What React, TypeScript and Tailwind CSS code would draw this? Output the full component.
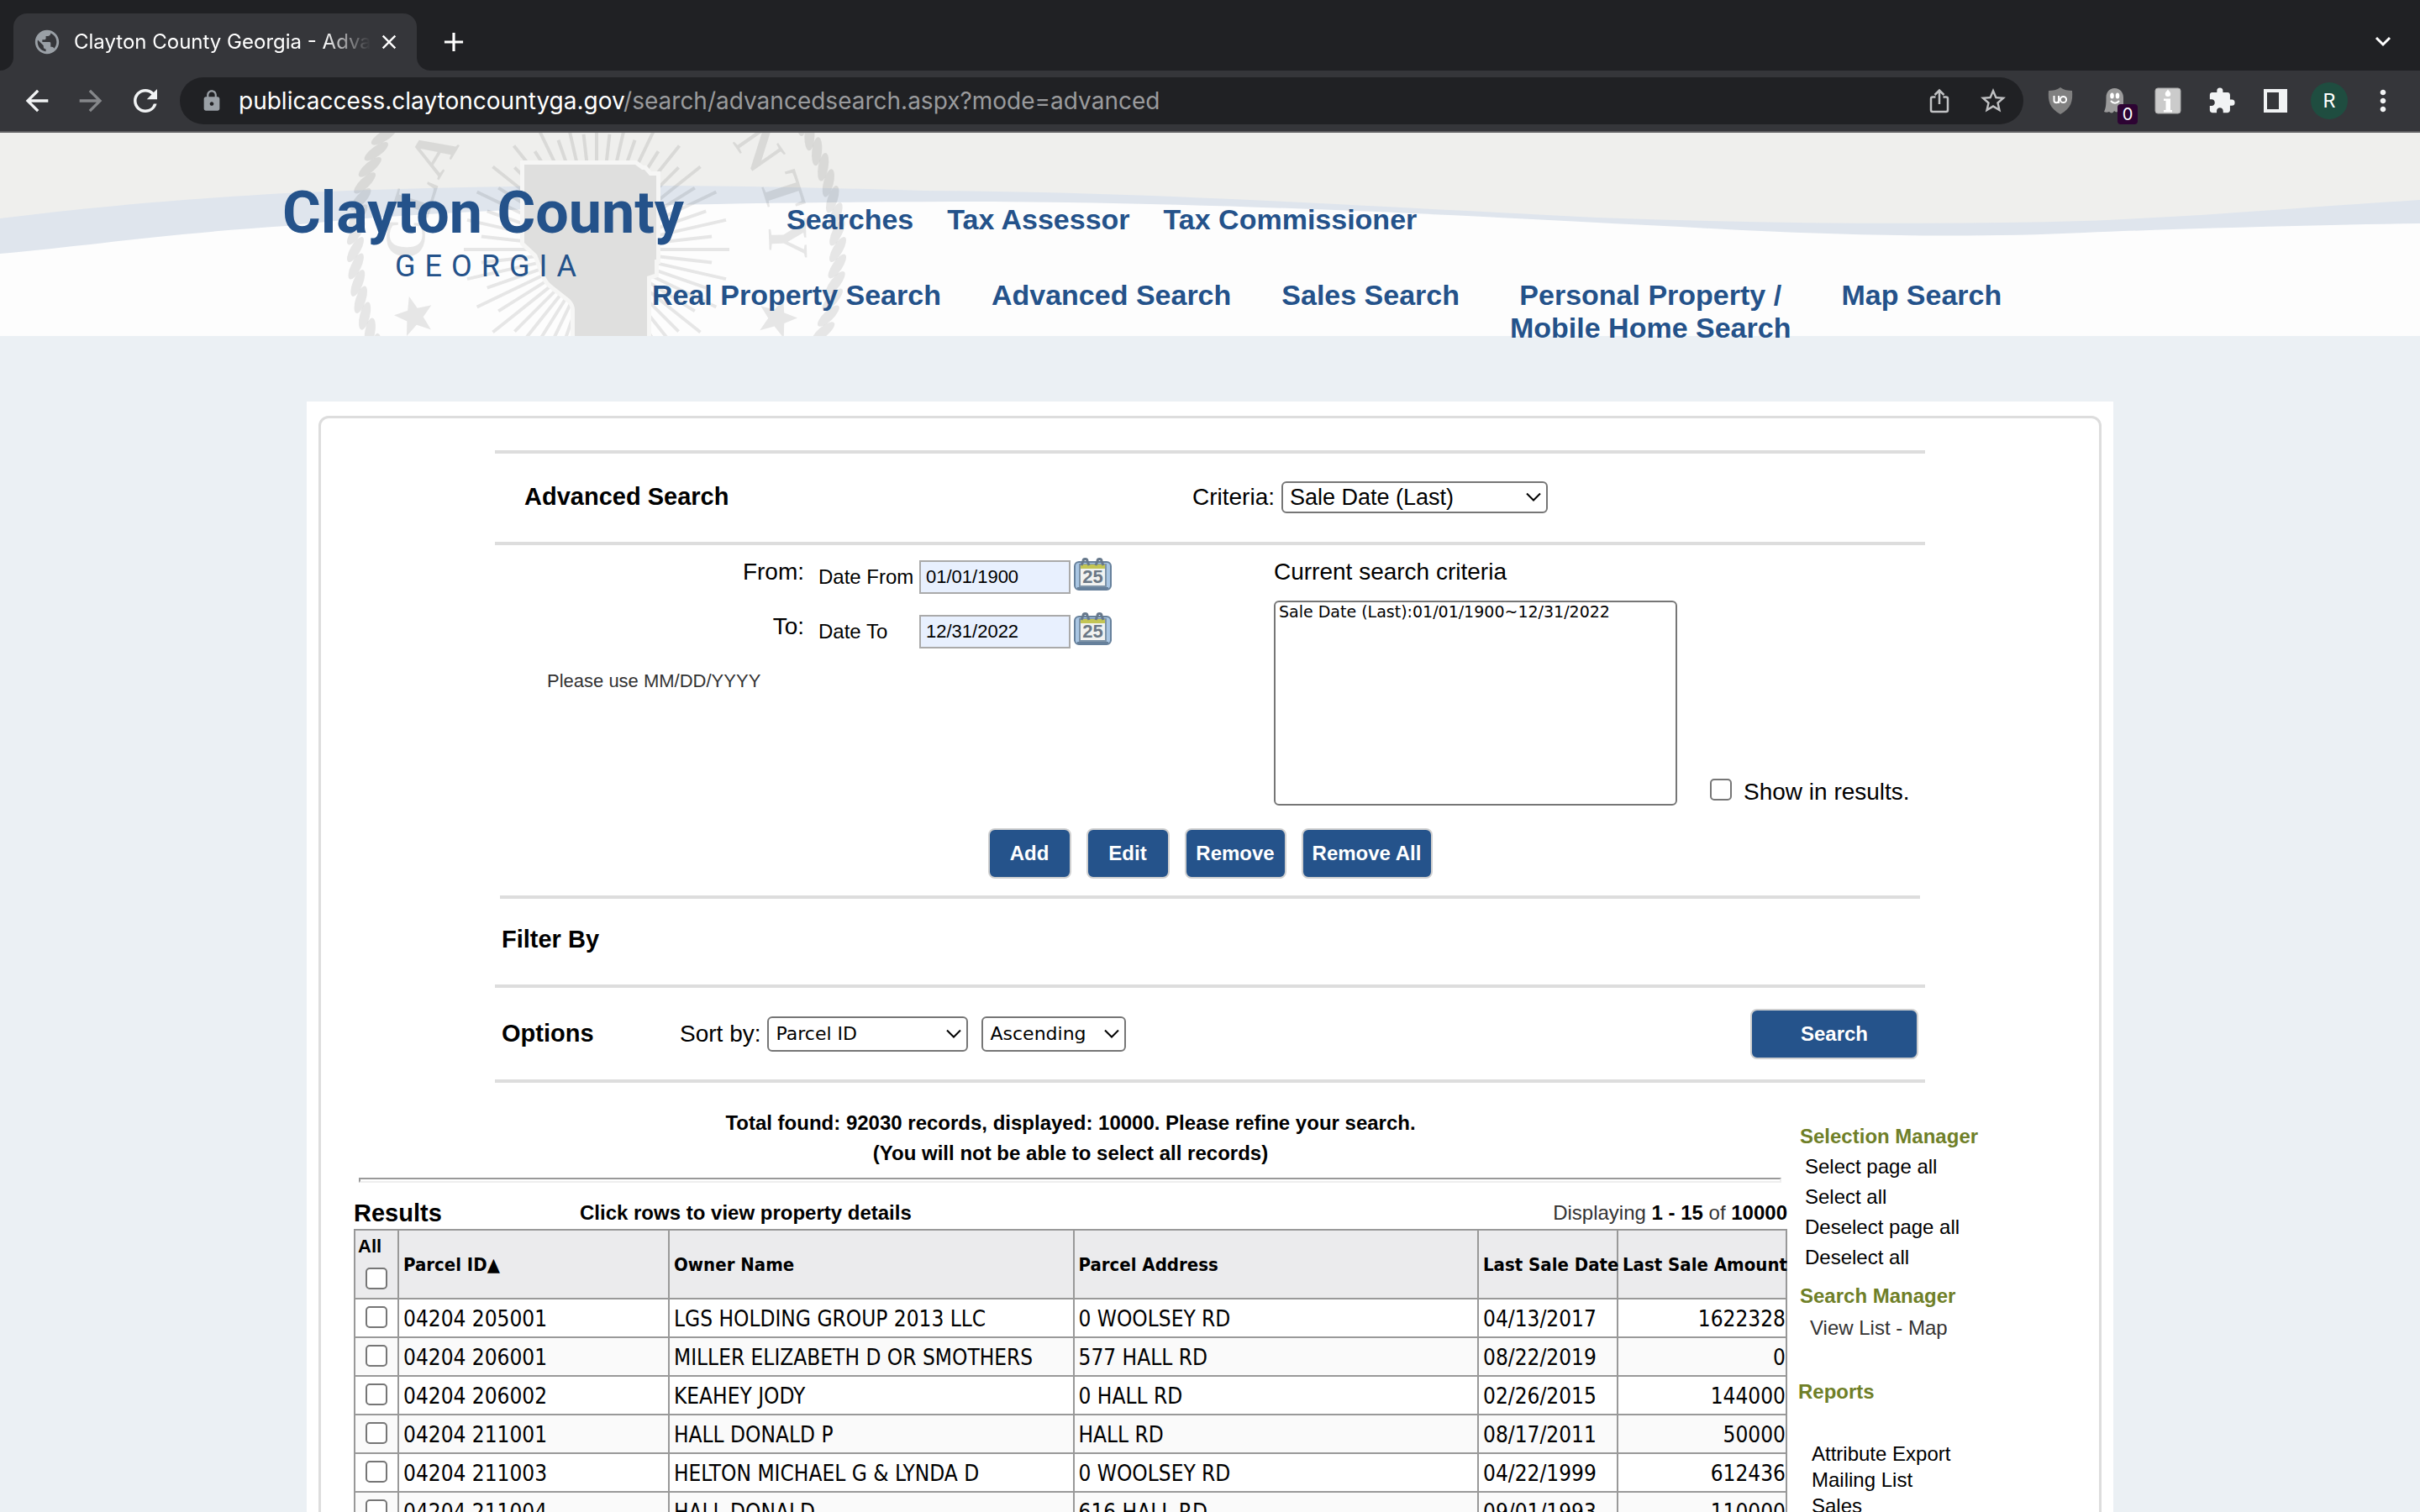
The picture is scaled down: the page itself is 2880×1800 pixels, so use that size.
import React from "react";
import {
  MdAdd,
  MdArrowBack,
  MdArrowForward,
  MdClose,
  MdExtension,
  MdLock,
  MdMoreVert,
  MdPublic,
  MdRefresh,
  MdStarBorder,
} from "react-icons/md";

/* ---------- Browser frame ---------- */

function TabFlare({ side }: { side: "left" | "right" }) {
  const left = side === "left";
  return (
    <svg
      className={left ? "absolute bottom-0 -left-4 size-4" : "absolute bottom-0 -right-4 size-4"}
      viewBox="0 0 16 16"
      aria-hidden="true"
    >
      <path d={left ? "M16 0A16 16 0 0 1 0 16H16Z" : "M0 0A16 16 0 0 0 16 16H0Z"} fill="#35363a" />
    </svg>
  );
}

function TabStrip() {
  return (
    <div className="flex h-[84px] items-end bg-[#202124]">
      <div className="relative ml-4 flex h-[68px] w-[480px] items-center rounded-t-2xl bg-[#35363a] pl-[23px] pr-[19px]">
        <TabFlare side="left" />
        <MdPublic className="size-[34px] shrink-0 text-[#9aa0a6]" />
        <span className="ml-[15px] flex-1 overflow-hidden whitespace-nowrap text-[24px] text-white [mask-image:linear-gradient(to_right,#000_84%,transparent)]">
          Clayton County Georgia - Adva
        </span>
        <button type="button" aria-label="Close tab" className="ml-2 text-white">
          <MdClose className="size-7" />
        </button>
        <TabFlare side="right" />
      </div>
      <button type="button" aria-label="New tab" className="mb-[15px] ml-[25px] text-white">
        <MdAdd className="size-[38px]" />
      </button>
      <button type="button" aria-label="Search tabs" className="mb-[24px] ml-auto mr-[34px]">
        <svg className="h-5 w-5" viewBox="0 0 20 20" fill="none" stroke="#fff" strokeWidth="3" aria-hidden="true">
          <path d="M2 5l8 8 8-8" />
        </svg>
      </button>
    </div>
  );
}

function ShieldIcon() {
  return (
    <svg className="h-8 w-[30px]" viewBox="0 0 30 32" aria-hidden="true">
      <path d="M15 0c4 3 9 4 14 4 1 12-1 21-14 28C2 25 0 16 1 4c5 0 10-1 14-4z" fill="#808080" />
      <path d="M7.500 10v5.500a2.800 2.800 0 0 0 5.600 0V10" fill="none" stroke="#fff" strokeWidth="2" />
      <path d="M13.100 19V10" stroke="#fff" strokeWidth="2" />
      <circle cx="18.500" cy="14.500" r="3.600" fill="none" stroke="#fff" strokeWidth="2" />
    </svg>
  );
}

function GhostIcon() {
  return (
    <svg className="h-[30px] w-[26px]" viewBox="0 0 26 30" aria-hidden="true">
      <path
        d="M13.500 0C20 0 24 5 24 11v16c-2 2-4 1-5-1-2 3-4 3-6 1-1 3-4 3-6 1-2 1-4 1-6 0 2-4 2.500-8 2.500-17C3.500 5 7 0 13.500 0z"
        fill="#9b9b9b"
      />
      <ellipse cx="10.500" cy="9" rx="2.300" ry="3.500" fill="#fff" />
      <ellipse cx="17" cy="9" rx="2.300" ry="3.500" fill="#fff" />
      <path d="M9 15c3 3.500 7 3.500 10 0" fill="none" stroke="#fff" strokeWidth="2" />
    </svg>
  );
}

function ExtCell({ label, children }: { label: string; children: React.ReactNode }) {
  return (
    <button type="button" aria-label={label} className="relative flex h-14 w-16 items-center justify-center">
      {children}
    </button>
  );
}

function Toolbar() {
  return (
    <div className="flex h-[74px] items-center border-b-2 border-[#5f5f62] bg-[#35363a] pl-6 pr-3">
      <div className="flex items-center gap-6 text-[#f1f3f4]">
        <button type="button" aria-label="Back">
          <MdArrowBack className="size-10" />
        </button>
        <button type="button" aria-label="Forward" className="text-[#85878a]">
          <MdArrowForward className="size-10" />
        </button>
        <button type="button" aria-label="Reload">
          <MdRefresh className="size-[42px]" />
        </button>
      </div>
      <div className="ml-5 mr-3 flex h-14 flex-1 items-center rounded-full bg-[#202124] pl-6 pr-1">
        <MdLock className="size-7 shrink-0 text-[#9aa0a6]" />
        <div className="ml-[18px] flex-1 whitespace-nowrap text-[28px] text-[#9a9b9d]">
          <span className="text-white">publicaccess.claytoncountyga.gov</span>/search/advancedsearch.aspx?mode=advanced
        </div>
        <ExtCell label="Share">
          <svg className="h-[30px] w-6" viewBox="0 0 24 30" fill="none" stroke="#c0c1c3" strokeWidth="2.500" aria-hidden="true">
            <path d="M7.500 10.500H4A2 2 0 0 0 2 12.500V26a2 2 0 0 0 2 2h16a2 2 0 0 0 2-2V12.500a2 2 0 0 0-2-2h-3.500M12 19V2.500M6.500 8L12 2.500 17.500 8" />
          </svg>
        </ExtCell>
        <ExtCell label="Bookmark">
          <MdStarBorder className="size-9 text-[#c0c1c3]" />
        </ExtCell>
      </div>
      <div className="flex items-center">
        <ExtCell label="Content blocker">
          <ShieldIcon />
        </ExtCell>
        <ExtCell label="Tracker blocker">
          <GhostIcon />
          <span className="absolute bottom-0 left-9 flex h-6 w-6 items-center justify-center rounded bg-[#2d0433] text-[20px] leading-6 text-white">
            0
          </span>
        </ExtCell>
        <ExtCell label="Information extension">
          <svg className="size-8" viewBox="0 0 32 32" aria-hidden="true">
            <rect x="1" y="1" width="30" height="30" rx="3" fill="#cbcbcb" stroke="#a8a8a8" />
            <path d="M16 2.500c1 2 3.300 3 3.300 5.200a3.300 3.300 0 0 1-6.600 0C12.700 5.500 15 4.500 16 2.500z" fill="#fff" />
            <path d="M11 13.500h8V27h2v2.500H11V27h2.500V16H11z" fill="#fff" />
          </svg>
        </ExtCell>
        <ExtCell label="Extensions">
          <MdExtension className="size-[34px] text-[#f1f3f4]" />
        </ExtCell>
        <ExtCell label="Side panel">
          <svg className="size-7" viewBox="0 0 28 28" aria-hidden="true">
            <path d="M0 0h28v28H0zM4 4v20h14V4z" fill="#f1f3f4" fillRule="evenodd" />
          </svg>
        </ExtCell>
        <ExtCell label="Profile">
          <span className="flex size-11 items-center justify-center rounded-full bg-[#1f4d40] font-['Roboto',sans-serif] text-[24px] text-white">
            R
          </span>
        </ExtCell>
        <ExtCell label="Menu">
          <MdMoreVert className="size-10 text-[#f1f3f4]" />
        </ExtCell>
      </div>
    </div>
  );
}

/* ---------- Site header ---------- */

const CX = 710;
const CY = 139;
const RAYS = Array.from({ length: 56 }, (_, i) => {
  const a = (i * 360 * Math.PI) / (56 * 180);
  const r = i % 2 ? 138 : 158;
  return { x1: CX + 60 * Math.cos(a), y1: CY + 60 * Math.sin(a), x2: CX + r * Math.cos(a), y2: CY + r * Math.sin(a) };
});
const STRANDS = Array.from({ length: 90 }, (_, i) => {
  const deg = i * 4;
  const a = (deg * Math.PI) / 180;
  return { x: CX + 287 * Math.cos(a), y: CY + 287 * Math.sin(a), r: deg + 120 };
});
const SEAL_LETTERS = [
  { c: "C", x: 482, y: 126, r: -87 },
  { c: "L", x: 494, y: 74, r: -72 },
  { c: "A", x: 515, y: 24, r: -59 },
  { c: "N", x: 904, y: 18, r: 55 },
  { c: "T", x: 932, y: 70, r: 72 },
  { c: "Y", x: 938, y: 126, r: 88 },
];
const STAR = "M0-24L6-8 23-7 10 4 15 21 0 11-15 21-10 4-23-7-6-8Z";
const COUNTY =
  "M624 38H756L764 44H767L773 51H781V151H779V168L770 171V250H684V211Q684 204 678 198L659 183Q652 178 649 171L639 145 624 131Z";

function HeaderArt() {
  return (
    <>
      <svg
        className="absolute inset-0 h-full w-full"
        viewBox="0 0 2880 242"
        preserveAspectRatio="none"
        aria-hidden="true"
      >
        <path d="M0 0H2880V242H0Z" fill="#fdfdfd" />
        <path
          d="M0 0H2880V108C2750 110 2600 114 2480 119C2350 125 2200 124 2000 112C1800 102 1500 84 1180 82C800 82 500 92 340 111C200 120 100 135 0 144Z"
          fill="#dfe5ed"
        />
        <path
          d="M0 0H2880V80C2750 88 2650 98 2480 105C2300 110 2100 108 1900 101C1600 86 1350 70 1100 69C850 61 600 60 340 72C200 80 100 90 0 102Z"
          fill="#efefed"
        />
      </svg>
      <svg className="absolute left-0 top-0 h-full w-[1100px]" viewBox="0 0 1100 242" aria-hidden="true">
        <g fill="#000" fillOpacity="0.09">
          {STRANDS.map((s, i) => (
            <ellipse key={i} rx="17" ry="6" transform={`translate(${s.x} ${s.y}) rotate(${s.r})`} />
          ))}
          {SEAL_LETTERS.map((l) => (
            <text
              key={l.c}
              transform={`translate(${l.x} ${l.y}) rotate(${l.r})`}
              textAnchor="middle"
              dominantBaseline="central"
              fontSize="68"
              fontWeight="700"
              fontFamily="Liberation Serif, serif"
            >
              {l.c}
            </text>
          ))}
          <path d={STAR} transform="translate(493 218) rotate(-15)" />
          <path d={STAR} transform="translate(925 220) rotate(18)" />
        </g>
        <g stroke="#000" strokeOpacity="0.09" strokeWidth="4">
          {RAYS.map((r, i) => (
            <line key={i} {...r} />
          ))}
        </g>
        <path d={COUNTY} fill="#dfdfde" stroke="#f6f6f5" strokeWidth="10" paintOrder="stroke" />
      </svg>
    </>
  );
}

function NavLink({ children }: { children: React.ReactNode }) {
  return (
    <a href="#" className="text-center">
      {children}
    </a>
  );
}

function SiteHeader() {
  return (
    <header className="relative flex h-[242px] bg-[#fdfdfd]">
      <HeaderArt />
      <a
        href="#"
        className="relative w-[776px] shrink-0 whitespace-nowrap pl-[336px] pt-[50px] font-['Roboto',sans-serif] text-[#24528a]"
        aria-label="Clayton County Georgia"
      >
        <span className="block text-[70px] font-bold leading-[90px]">Clayton County</span>
        <span className="block pl-[134px] text-[36px] leading-[38px] tracking-[11px]">GEORGIA</span>
      </a>
      <nav className="relative flex flex-col gap-[51px] whitespace-nowrap pt-[84px] text-[34px] font-bold leading-[39px] text-[#24528a]">
        <div className="flex gap-10 pl-[160px]">
          <NavLink>Searches</NavLink>
          <NavLink>Tax Assessor</NavLink>
          <NavLink>Tax Commissioner</NavLink>
        </div>
        <div className="flex gap-[60px]">
          <NavLink>Real Property Search</NavLink>
          <NavLink>Advanced Search</NavLink>
          <NavLink>Sales Search</NavLink>
          <NavLink>
            Personal Property /<br />
            Mobile Home Search
          </NavLink>
          <NavLink>Map Search</NavLink>
        </div>
      </nav>
    </header>
  );
}

/* ---------- Form parts ---------- */

function Rule({ inset = false }: { inset?: boolean }) {
  return <hr className={inset ? "mx-1.5 border-t-4 border-[#ddd]" : "border-t-4 border-[#ddd]"} />;
}

function Dropdown({ id, value, className, label }: { id: string; value: string; className: string; label?: string }) {
  return (
    <div className="relative">
      <select
        id={id}
        aria-label={label}
        className={`block appearance-none rounded-md border-2 border-[#767676] bg-white pl-2 pr-8 text-black ${className}`}
      >
        <option>{value}</option>
      </select>
      <svg
        className="pointer-events-none absolute inset-y-0 right-2 my-auto h-3 w-[18px]"
        viewBox="0 0 18 12"
        fill="none"
        stroke="#000"
        strokeWidth="2"
        aria-hidden="true"
      >
        <path d="M1 1.500l8 8 8-8" />
      </svg>
    </div>
  );
}

function Checkbox({ id, label }: { id: string; label?: string }) {
  return (
    <input
      id={id}
      type="checkbox"
      aria-label={label}
      className="block size-[26px] shrink-0 appearance-none rounded-[5px] border-2 border-[#767676] bg-white checked:bg-[#0075ff]"
    />
  );
}

function BlueButton({ className, children }: { className: string; children: React.ReactNode }) {
  return (
    <button
      type="button"
      className={`h-[60px] rounded-lg border-2 border-[#d0d0d0] bg-[#25538b] text-[24px] font-bold text-white ${className}`}
    >
      {children}
    </button>
  );
}

function CalendarIcon() {
  return (
    <svg className="h-10 w-[45px]" viewBox="0 0 45 40" aria-hidden="true">
      <rect x="1" y="6" width="43" height="33" rx="5" fill="#a9c6e3" stroke="#66809b" strokeWidth="2" />
      <path d="M4 37.500h37" stroke="#66809b" strokeWidth="3" />
      <rect x="6" y="8" width="33" height="28" fill="#7d93a8" />
      <rect x="8" y="9" width="29" height="25" fill="#f2f3f1" />
      <rect x="8" y="9" width="29" height="5" fill="#c3c554" />
      <path d="M9 10l2-5a2.500 2.500 0 0 1 5 0l2 5M26 10l2-5a2.500 2.500 0 0 1 5 0l2 5" fill="none" stroke="#66788b" strokeWidth="3" />
      <text x="22.500" y="31" textAnchor="middle" fontSize="22" fontWeight="700" fontFamily="Liberation Sans, sans-serif" fill="#6b7885">
        25
      </text>
    </svg>
  );
}

function DateRow({ id, side, label, value }: { id: string; side: string; label: string; value: string }) {
  return (
    <div className="flex h-[65px] items-start">
      <span className="w-[368px] text-right text-[28px] leading-9">{side}</span>
      <label htmlFor={id} className="ml-[17px] w-[116px] whitespace-nowrap pt-1 text-[24px] leading-10">
        {label}
      </label>
      <input
        id={id}
        defaultValue={value}
        className="ml-1 mt-1 h-10 w-[180px] border-2 border-[#aaa] bg-[#e8f0fe] pl-1.5 text-[22px]"
      />
      <button type="button" aria-label={`Pick ${label}`} className="ml-1">
        <CalendarIcon />
      </button>
    </div>
  );
}

function SearchForm() {
  return (
    <form className="mx-auto w-full max-w-[1702px] pt-[38px]">
      <Rule />
      <div className="flex h-[105px] items-center pb-0.5 pl-[35px]">
        <h1 className="w-[795px] text-[29px] font-bold">Advanced Search</h1>
        <label htmlFor="criteria" className="mr-2 text-[28px]">
          Criteria:
        </label>
        <Dropdown id="criteria" value="Sale Date (Last)" className="h-[38px] w-[317px] text-[27px] leading-8" />
      </div>
      <Rule />
      <div className="flex pt-3.5">
        <div className="w-[927px]">
          <DateRow id="from" side="From:" label="Date From" value="01/01/1900" />
          <DateRow id="to" side="To:" label="Date To" value="12/31/2022" />
          <p className="pl-[62px] pt-0.5 text-[22px] leading-8 text-[#333]">Please use MM/DD/YYYY</p>
        </div>
        <div>
          <label htmlFor="current" className="block text-[28px] leading-9">
            Current search criteria
          </label>
          <select
            id="current"
            multiple
            className="mt-4 block h-[244px] w-[480px] overflow-hidden rounded-md border-2 border-[#767676] bg-white px-1 font-['DejaVu_Sans',sans-serif] text-[19px]"
          >
            <option className="p-0">Sale Date (Last):01/01/1900~12/31/2022</option>
          </select>
        </div>
        <div className="ml-[39px] flex items-start gap-3.5 self-end">
          <Checkbox id="show" />
          <label htmlFor="show" className="text-[28px] leading-8">
            Show in results.
          </label>
        </div>
      </div>
      <div className="flex justify-center gap-[18px] pb-5 pt-[27px]">
        <BlueButton className="w-[99px]">Add</BlueButton>
        <BlueButton className="w-[99px]">Edit</BlueButton>
        <BlueButton className="w-[121px]">Remove</BlueButton>
        <BlueButton className="w-[156px]">Remove All</BlueButton>
      </div>
      <Rule inset />
      <h2 className="flex h-[102px] items-center pb-1 pl-2 text-[29px] font-bold">Filter By</h2>
      <Rule />
      <div className="flex h-[109px] items-center pl-2 pr-2">
        <h2 className="w-[212px] text-[29px] font-bold">Options</h2>
        <label htmlFor="sort" className="mr-2 text-[28px]">
          Sort by:
        </label>
        <div className="flex gap-4">
          <Dropdown id="sort" value="Parcel ID" className="h-[42px] w-[239px] font-['DejaVu_Sans',sans-serif] text-[22px]" />
          <Dropdown
            id="order"
            label="Sort order"
            value="Ascending"
            className="h-[42px] w-[172px] font-['DejaVu_Sans',sans-serif] text-[22px]"
          />
        </div>
        <BlueButton className="ml-auto w-[200px]">Search</BlueButton>
      </div>
      <Rule />
    </form>
  );
}

/* ---------- Results ---------- */

const ROWS = [
  ["04204 205001", "LGS HOLDING GROUP 2013 LLC", "0 WOOLSEY RD", "04/13/2017", "1622328"],
  ["04204 206001", "MILLER ELIZABETH D OR SMOTHERS", "577 HALL RD", "08/22/2019", "0"],
  ["04204 206002", "KEAHEY JODY", "0 HALL RD", "02/26/2015", "144000"],
  ["04204 211001", "HALL DONALD P", "HALL RD", "08/17/2011", "50000"],
  ["04204 211003", "HELTON MICHAEL G & LYNDA D", "0 WOOLSEY RD", "04/22/1999", "612436"],
  ["04204 211004", "HALL DONALD", "616 HALL RD", "09/01/1993", "110000"],
];

function ResultsTable() {
  return (
    <table className="w-full table-fixed border-collapse whitespace-nowrap border-2 border-[#999] font-['DejaVu_Sans_Condensed','DejaVu_Sans',sans-serif] text-[26px]">
      <colgroup>
        <col className="w-[52px]" />
        <col className="w-[322px]" />
        <col />
        <col />
        <col className="w-[166px]" />
        <col className="w-[201px]" />
      </colgroup>
      <thead>
        <tr className="h-[82px] bg-[#ebebed] text-left text-[22px]">
          <th className="border-2 border-[#999] p-0 align-top">
            <label htmlFor="all" className="block pl-[3px] pt-1.5 font-['Liberation_Sans',Arial,sans-serif] leading-[26px]">
              All
            </label>
            <div className="flex justify-center pt-3">
              <Checkbox id="all" />
            </div>
          </th>
          <th className="border-2 border-[#999] py-0 pl-[5px] pr-0">Parcel ID▲</th>
          <th className="border-2 border-[#999] py-0 pl-[5px] pr-0">Owner Name</th>
          <th className="border-2 border-[#999] py-0 pl-[5px] pr-0">Parcel Address</th>
          <th className="border-2 border-[#999] py-0 pl-[5px] pr-0">Last Sale Date</th>
          <th className="border-2 border-[#999] py-0 pl-[5px] pr-0">Last Sale Amount</th>
        </tr>
      </thead>
      <tbody>
        {ROWS.map((row) => (
          <tr key={row[0]} className="h-[46px] leading-[38px] odd:bg-white even:bg-[#fafafa]">
            <td className="border-2 border-[#999] p-0">
              <div className="flex justify-center pb-0.5">
                <Checkbox id={row[0]} label={`Select ${row[0]}`} />
              </div>
            </td>
            <td className="border-2 border-[#999] pb-0 pl-[5px] pr-0 pt-0.5">{row[0]}</td>
            <td className="border-2 border-[#999] pb-0 pl-[5px] pr-0 pt-0.5">{row[1]}</td>
            <td className="border-2 border-[#999] pb-0 pl-[5px] pr-0 pt-0.5">{row[2]}</td>
            <td className="border-2 border-[#999] pb-0 pl-[5px] pr-0 pt-0.5">{row[3]}</td>
            <td className="border-2 border-[#999] px-0 pb-0 pt-0.5 text-right">{row[4]}</td>
          </tr>
        ))}
      </tbody>
    </table>
  );
}

function Results() {
  return (
    <section className="min-w-0 flex-1 pt-[30px]">
      <p className="text-center text-[24px] font-bold leading-9">
        Total found: 92030 records, displayed: 10000. Please refine your search.
        <br />
        (You will not be able to select all records)
      </p>
      <div className="ml-1.5 mr-[7px] mt-[11px] h-1.5 border-2 border-b-[#eee] border-l-[#999] border-r-[#eee] border-t-[#999]" />
      <div className="flex h-[55px] items-end pb-0.5 text-[24px] leading-[34px]">
        <h2 className="w-[269px] text-[29px] font-bold">Results</h2>
        <span className="font-bold">Click rows to view property details</span>
        <span className="ml-auto text-[#333]">
          Displaying <b className="text-black">1 - 15</b> of <b className="text-black">10000</b>
        </span>
      </div>
      <ResultsTable />
    </section>
  );
}

function Sidebar() {
  return (
    <aside className="w-[358px] shrink-0 pt-[46px] text-[24px] leading-9">
      <h3 className="pl-0.5 font-bold text-[#6f7f28]">Selection Manager</h3>
      <ul className="pl-2">
        <li><a href="#">Select page all</a></li>
        <li><a href="#">Select all</a></li>
        <li><a href="#">Deselect page all</a></li>
        <li><a href="#">Deselect all</a></li>
      </ul>
      <h3 className="pl-0.5 pt-2.5 font-bold text-[#6f7f28]">Search Manager</h3>
      <p className="pl-[14px] pt-0.5 text-[#333]">
        <a href="#">View List</a> - <a href="#">Map</a>
      </p>
      <h3 className="pt-10 font-bold text-[#6f7f28]">Reports</h3>
      <ul className="pl-4 pt-10 leading-[31px]">
        <li><a href="#">Attribute Export</a></li>
        <li><a href="#">Mailing List</a></li>
        <li><a href="#">Sales</a></li>
      </ul>
    </aside>
  );
}

export default function App() {
  return (
    <div className="flex h-screen flex-col overflow-hidden bg-[#ebf0f4] font-['Liberation_Sans',Arial,sans-serif] text-black">
      <div className="shrink-0 font-['Inter',sans-serif]">
        <TabStrip />
        <Toolbar />
      </div>
      <div className="min-h-0 flex-1 overflow-hidden">
        <SiteHeader />
        <main className="mx-auto mt-[78px] w-full max-w-[2150px] bg-white px-3.5 pt-[17px]">
          <div className="rounded-t-xl border-[3px] border-[#ddd]">
            <SearchForm />
            <div className="flex gap-[13px] pl-[39px]">
              <Results />
              <Sidebar />
            </div>
          </div>
        </main>
      </div>
    </div>
  );
}
